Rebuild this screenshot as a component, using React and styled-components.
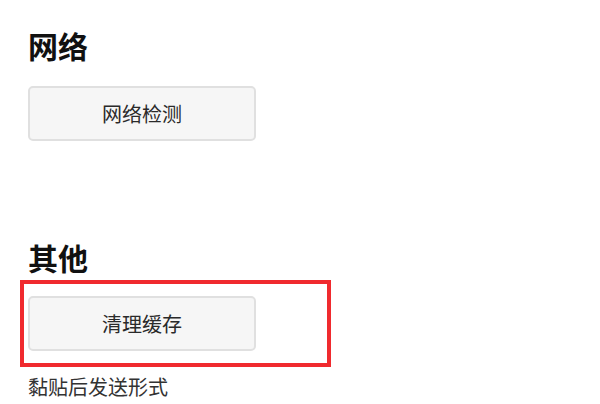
import React from "react";
import styled, { createGlobalStyle } from "styled-components";

const Global = createGlobalStyle`
  html, body { margin: 0; padding: 0; background: #ffffff; }
  body { font-family: "Noto Sans CJK SC", "Noto Sans", sans-serif; color: #222; }
`;

const Page = styled.div`
  width: 600px;
  height: 404px;
  overflow: hidden;
  padding: 25px 0 0 28px;
  box-sizing: border-box;
  display: flex;
  flex-direction: column;
`;

const Section = styled.section`
  display: flex;
  flex-direction: column;
  align-items: flex-start;
  margin-bottom: ${(p) => p.$gap || 0}px;
`;

const Heading = styled.h2`
  margin: 0;
  font-size: 30px;
  line-height: 40px;
  font-weight: 700;
  color: #111;
`;

const Button = styled.button`
  width: 228px;
  height: 55px;
  box-sizing: border-box;
  border: 2px solid #e0e0e0;
  border-radius: 5px;
  background: #f6f6f6;
  color: #2a2a2a;
  font-family: inherit;
  font-size: 20px;
  padding: 0;
  cursor: pointer;
  margin-top: ${(p) => p.$top || 0}px;
`;

const Highlight = styled.div`
  width: 311px;
  height: 87px;
  box-sizing: border-box;
  border: 4px solid #f02a2e;
  margin: ${(p) => p.$top || 0}px 0 0 -8px;
  padding: 12px 4px;
  display: flex;
  align-items: flex-start;
`;

const Label = styled.div`
  font-size: 20px;
  line-height: 28px;
  color: #333;
  margin-top: 6px;
`;

export default function App() {
  return (
    <>
      <Global />
      <Page>
        <Section $gap={96}>
          <Heading>网络</Heading>
          <Button $top={21}>网络检测</Button>
        </Section>
        <Section>
          <Heading>其他</Heading>
          <Highlight $top={3}>
            <Button>清理缓存</Button>
          </Highlight>
          <Label>黏贴后发送形式</Label>
        </Section>
      </Page>
    </>
  );
}
